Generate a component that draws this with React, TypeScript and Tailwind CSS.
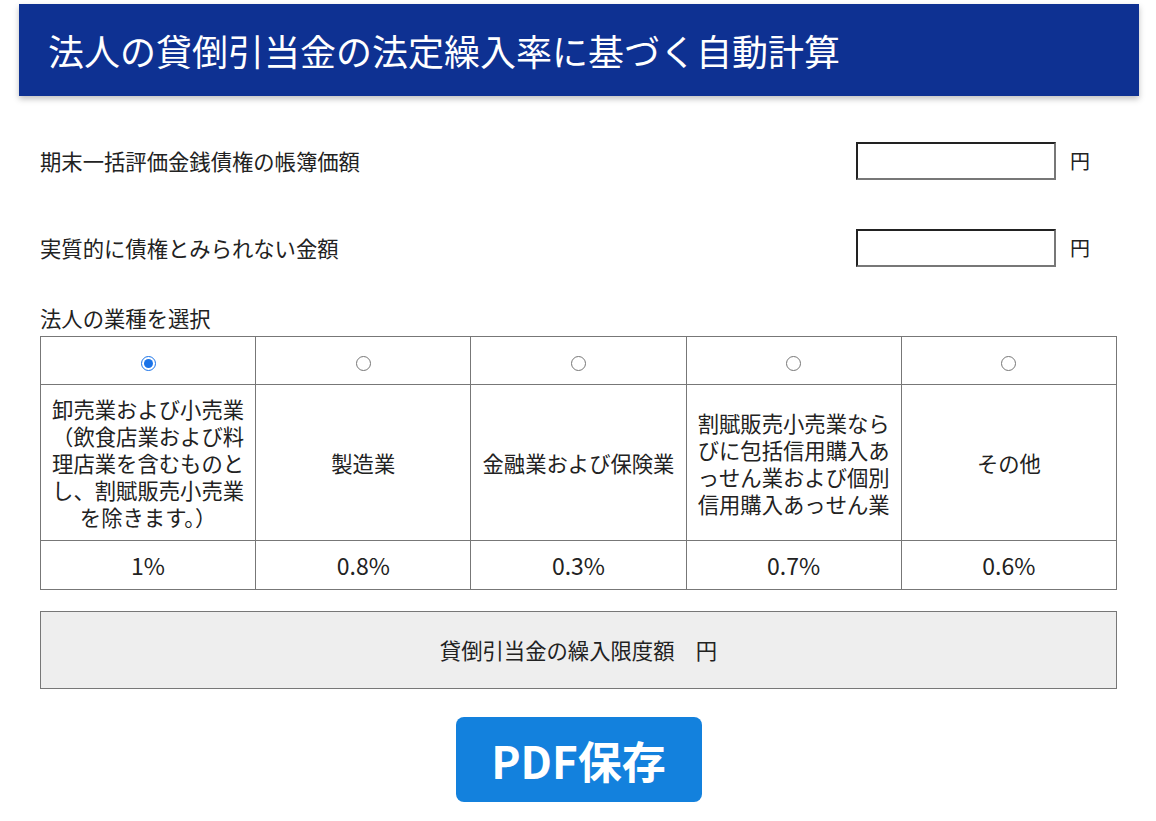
import { useState } from 'react';

const industries = [
  {
    name: '卸売業および小売業（飲食店業および料理店業を含むものとし、割賦販売小売業を除きます。）',
    rate: '1%',
  },
  { name: '製造業', rate: '0.8%' },
  { name: '金融業および保険業', rate: '0.3%' },
  { name: '割賦販売小売業ならびに包括信用購入あっせん業および個別信用購入あっせん業', rate: '0.7%' },
  { name: 'その他', rate: '0.6%' },
];

export default function App() {
  const [selected, setSelected] = useState(0);

  return (
    <div
      className="min-h-screen w-full bg-white text-[#222]"
      style={{ fontFamily: '"Noto Sans CJK JP", "Noto Sans", sans-serif' }}
    >
      <div className="pl-[19px] pr-[17px] pt-[4px]">
        <header className="h-[92px] bg-[#0e3192] flex items-center pl-[29px] shadow-[0_3px_6px_rgba(0,0,0,0.25)]">
          <h1 className="text-white text-[36px] leading-none">
            法人の貸倒引当金の法定繰入率に基づく自動計算
          </h1>
        </header>
      </div>

      <main className="pl-[40px] pr-[39px] pt-[46px]">
        <div className="flex items-center h-[38px]">
          <span className="flex-1 text-[21.33px]">期末一括評価金銭債権の帳簿価額</span>
          <input className="w-[200px] h-[38px] border-2 border-t-[#222] border-l-[#222] border-b-[#777] border-r-[#777] outline-none mr-[14px]" />
          <span className="w-[47px] text-[20px]">円</span>
        </div>

        <div className="flex items-center h-[38px] mt-[49px]">
          <span className="flex-1 text-[21.33px]">実質的に債権とみられない金額</span>
          <input className="w-[200px] h-[38px] border-2 border-t-[#222] border-l-[#222] border-b-[#777] border-r-[#777] outline-none mr-[14px]" />
          <span className="w-[47px] text-[20px]">円</span>
        </div>

        <div className="mt-[37px] text-[21.33px] leading-[28px]">法人の業種を選択</div>

        <table className="w-full mt-[4px] border-collapse table-fixed">
          <tbody>
            <tr className="h-[48px]">
              {industries.map((ind, i) => (
                <td key={i} className="border border-[#777] text-center align-middle">
                  <input
                    type="radio"
                    name="industry"
                    checked={selected === i}
                    onChange={() => setSelected(i)}
                    className="w-[15px] h-[15px] accent-[#1a73e8] align-middle"
                  />
                </td>
              ))}
            </tr>
            <tr className="h-[156px]">
              {industries.map((ind, i) => (
                <td
                  key={i}
                  className="border border-[#777] text-center align-middle px-[9px] text-[21.33px] leading-[27px]"
                >
                  {ind.name}
                </td>
              ))}
            </tr>
            <tr className="h-[49px]">
              {industries.map((ind, i) => (
                <td key={i} className="border border-[#777] text-center align-middle text-[23px]">
                  {ind.rate}
                </td>
              ))}
            </tr>
          </tbody>
        </table>

        <div className="mt-[21px] h-[78px] bg-[#eeeeee] border border-[#777] flex items-center justify-center text-[21.33px]">
          貸倒引当金の繰入限度額　円
        </div>

        <div className="flex justify-center mt-[28px]">
          <button className="w-[246px] h-[85px] bg-[#1381dd] rounded-[8px] text-white text-[44px] font-bold leading-none">
            PDF保存
          </button>
        </div>
      </main>
    </div>
  );
}
